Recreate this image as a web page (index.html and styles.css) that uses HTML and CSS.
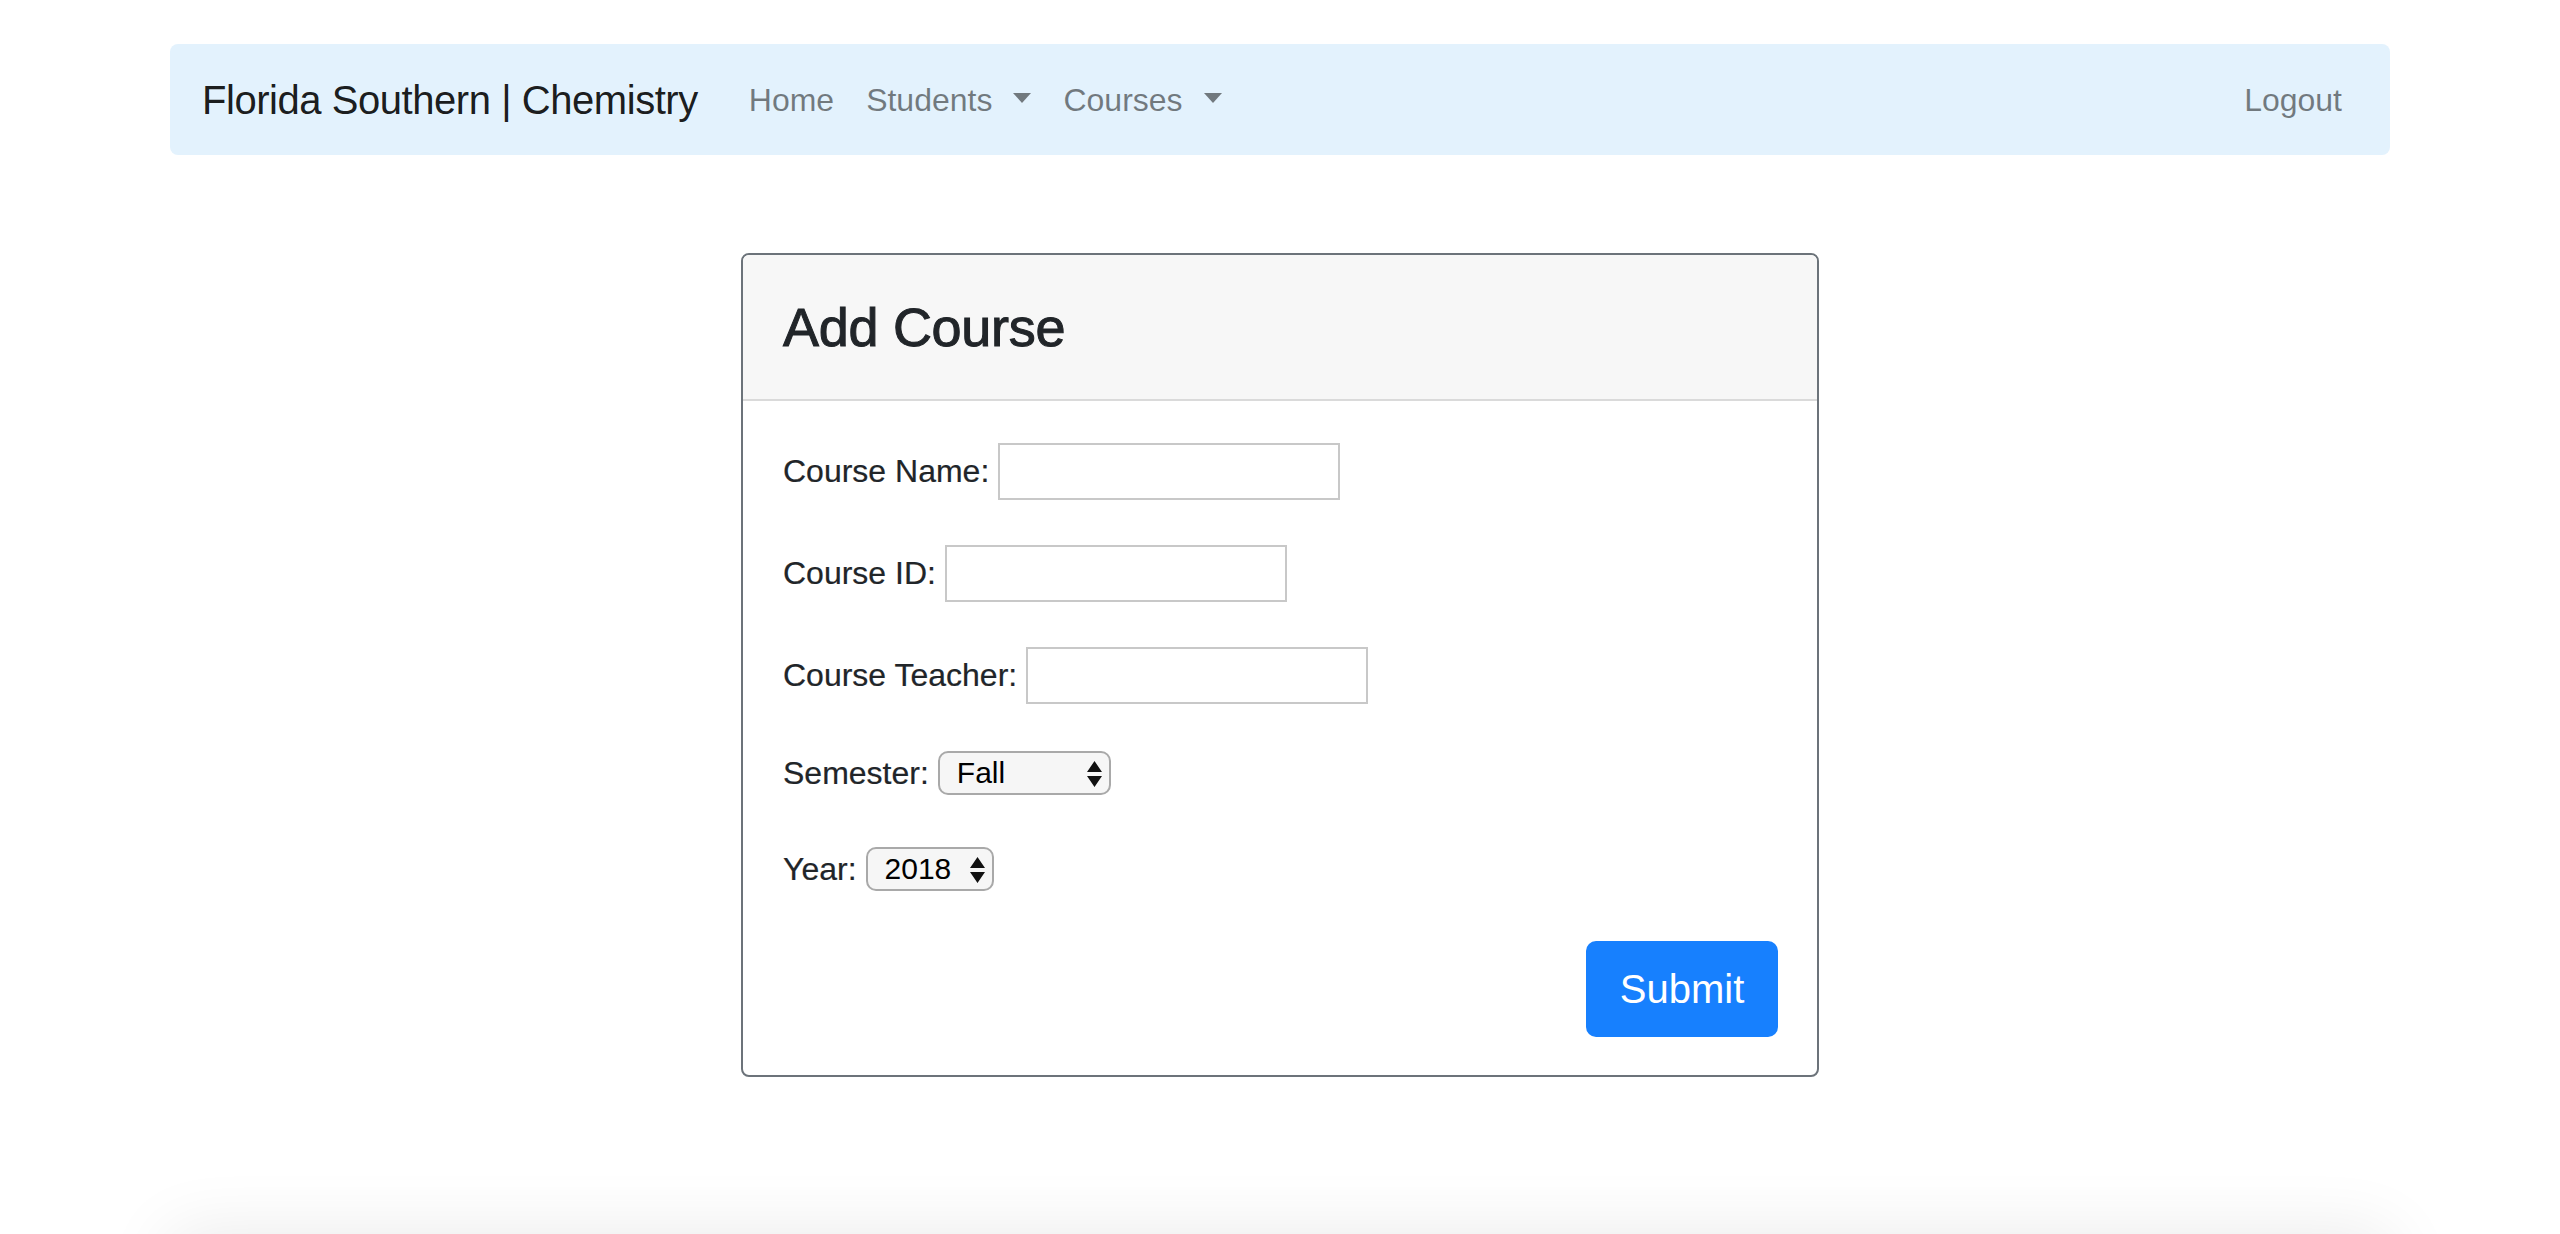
FILE: index.html
```html
<!DOCTYPE html>
<html lang="en">
<head>
<meta charset="utf-8">
<title>Add Course</title>
<link rel="stylesheet" href="styles.css">
</head>
<body>
<div class="page">
  <nav class="navbar">
    <a class="brand" href="#">Florida Southern | Chemistry</a>
    <ul class="nav">
      <li><a class="nav-link" href="#">Home</a></li>
      <li><a class="nav-link dropdown" href="#">Students</a></li>
      <li><a class="nav-link dropdown" href="#">Courses</a></li>
    </ul>
    <ul class="nav nav-right">
      <li><a class="nav-link" href="#">Logout</a></li>
    </ul>
  </nav>

  <main class="card">
    <div class="card-header">
      <h3 class="card-title">Add Course</h3>
    </div>
    <form class="card-body">
      <div class="field field-text">
        <label for="cname">Course Name:</label>
        <input id="cname" type="text">
      </div>
      <div class="field field-text">
        <label for="cid">Course ID:</label>
        <input id="cid" type="text">
      </div>
      <div class="field field-text">
        <label for="cteacher">Course Teacher:</label>
        <input id="cteacher" type="text">
      </div>
      <div class="field field-select">
        <label for="semester">Semester:</label>
        <span class="select-wrap select-semester">
          <select id="semester">
            <option>Fall</option>
            <option>Spring</option>
            <option>Summer</option>
          </select>
          <svg class="select-arrows" width="15" height="26" viewBox="0 0 15 26"><path d="M0 11 L7.5 0 L15 11 Z M0 15 L15 15 L7.5 26 Z" fill="#111"/></svg>
        </span>
      </div>
      <div class="field field-select">
        <label for="year">Year:</label>
        <span class="select-wrap select-year">
          <select id="year">
            <option>2018</option>
            <option>2019</option>
            <option>2020</option>
          </select>
          <svg class="select-arrows" width="15" height="26" viewBox="0 0 15 26"><path d="M0 11 L7.5 0 L15 11 Z M0 15 L15 15 L7.5 26 Z" fill="#111"/></svg>
        </span>
      </div>
      <div class="actions">
        <button type="button" class="btn">Submit</button>
      </div>
    </form>
  </main>

  <footer class="footer"></footer>
</div>
</body>
</html>
```

FILE: styles.css
```css
html, body {
  margin: 0;
  padding: 0;
  background: #ffffff;
}

body {
  font-family: "Liberation Sans", Arial, Helvetica, sans-serif;
  color: #212529;
}

.page {
  padding-top: 44px;
}

/* Navbar */
.navbar {
  width: 2220px;
  height: 111px;
  margin: 0 auto;
  box-sizing: border-box;
  padding: 0 32px;
  background: #e3f2fd;
  border-radius: 8px;
  display: flex;
  align-items: center;
}

.brand {
  font-size: 40px;
  line-height: 60px;
  letter-spacing: -0.45px;
  color: rgba(0, 0, 0, 0.9);
  text-decoration: none;
  margin-right: 35px;
  white-space: nowrap;
}

.nav {
  list-style: none;
  margin: 0;
  padding: 0;
  display: flex;
}

.nav-right {
  margin-left: auto;
}

.nav-link {
  display: block;
  padding: 16px;
  font-size: 32px;
  line-height: 48px;
  color: rgba(0, 0, 0, 0.5);
  text-decoration: none;
  white-space: nowrap;
}

.dropdown::after {
  content: "";
  display: inline-block;
  margin-left: 21px;
  vertical-align: 8px;
  border-top: 10px solid;
  border-left: 9.5px solid transparent;
  border-right: 9.5px solid transparent;
}

/* Card */
.card {
  width: 1078px;
  margin: 98px auto 0;
  box-sizing: border-box;
  border: 2px solid #6c737a;
  border-radius: 8px;
  overflow: hidden;
  background: #fff;
}

.card-header {
  padding: 24px 40px 23px;
  background: #f7f7f7;
  border-bottom: 2px solid #dadada;
}

.card-title {
  margin: 0;
  font-size: 54px;
  line-height: 97px;
  font-weight: 400;
  letter-spacing: -0.3px;
  -webkit-text-stroke: 1px #212529;
  color: #212529;
}

.card-body {
  padding: 42px 39px 38px 40px;
  display: flex;
  flex-direction: column;
}

.field {
  display: flex;
  align-items: center;
  gap: 9px;
}

.field label {
  font-size: 32px;
  color: #212529;
  -webkit-text-stroke: 0.2px #212529;
}

.field-text {
  height: 57px;
  margin-bottom: 45px;
}

.field-text input {
  width: 342px;
  height: 57px;
  box-sizing: border-box;
  border: 2px solid #c8c8c8;
  border-radius: 0;
  background: #fff;
  font-family: inherit;
  font-size: 30px;
  padding: 0 10px;
  outline: none;
}

.field-select {
  height: 48px;
  margin-bottom: 48px;
}

.select-wrap {
  position: relative;
  display: inline-block;
  height: 44px;
}

.select-wrap select {
  -webkit-appearance: none;
  appearance: none;
  height: 44px;
  box-sizing: border-box;
  border: 2px solid #a9a9a9;
  border-radius: 10px;
  background: #f6f6f6;
  color: #000;
  font-family: inherit;
  font-size: 30px;
  line-height: 40px;
  padding: 0 0 0 17px;
  margin: 0;
  outline: none;
}

.select-semester select {
  width: 173px;
}

.select-year select {
  width: 128px;
}

.select-arrows {
  position: absolute;
  right: 9px;
  top: 10px;
  pointer-events: none;
}

.actions {
  display: flex;
  justify-content: flex-end;
}

.btn {
  width: 192px;
  height: 96px;
  border: none;
  border-radius: 10px;
  background: #1780fe;
  color: #fff;
  font-family: inherit;
  font-size: 40px;
  padding: 0;
  cursor: pointer;
}

/* Footer shadow peeking at the bottom edge */
.footer {
  width: 2140px;
  height: 0;
  margin: 157px auto 0;
  box-shadow: 0 40px 70px 40px rgba(0, 0, 0, 0.09);
}
```
